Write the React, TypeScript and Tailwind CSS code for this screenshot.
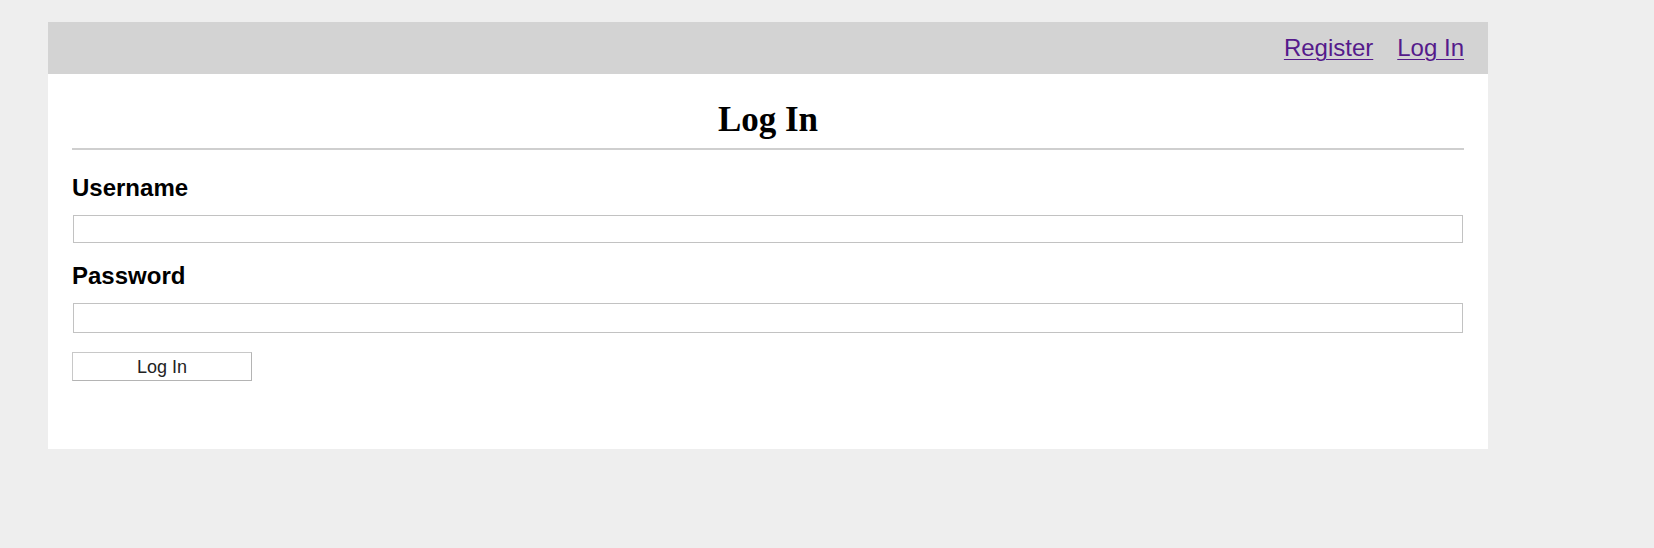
import React from "react";

export default function App() {
  return (
    <div className="min-h-[548px] w-full bg-[#eeeeee] pt-[22px] pl-[48px]">
      <div className="w-[1440px] bg-white">
        {/* top bar with auth links */}
        <nav className="flex h-[52px] items-center justify-end gap-[24px] bg-[#d3d3d3] px-[24px] font-['Liberation_Sans',Arial,sans-serif] text-[24px] leading-[52px]">
          <a href="#" className="text-[#551a8b] underline decoration-1 underline-offset-[3px]">
            Register
          </a>
          <a href="#" className="text-[#551a8b] underline decoration-1 underline-offset-[3px]">
            Log In
          </a>
        </nav>

        <main className="px-[24px] pt-[26px] pb-[68px]">
          <h1 className="text-center font-['Liberation_Serif','Times_New_Roman',serif] text-[35px] font-bold leading-[40px] text-black">
            Log In
          </h1>
          <hr className="mt-[8px] h-[2px] border-0 bg-[#cfcfcf]" />

          <form className="flex flex-col font-['Liberation_Sans',Arial,sans-serif]" onSubmit={(e) => e.preventDefault()}>
            <label htmlFor="username" className="mt-[24px] text-[24px] font-bold leading-[28px] text-black">
              Username
            </label>
            <input
              id="username"
              type="text"
              className="mx-px mt-[13px] h-[28px] border border-[#c2c2c2] bg-white px-1 text-[16px] outline-none"
            />

            <label htmlFor="password" className="mt-[19px] text-[24px] font-bold leading-[28px] text-black">
              Password
            </label>
            <input
              id="password"
              type="password"
              className="mx-px mt-[13px] h-[30px] border border-[#c2c2c2] bg-white px-1 text-[16px] outline-none"
            />

            <button
              type="submit"
              className="mt-[19px] h-[29px] w-[180px] border border-[#c8c8c8] border-r-[#b4b4b4] border-b-[#b4b4b4] bg-white text-[18px] leading-none text-[#222222]"
            >
              Log In
            </button>
          </form>
        </main>
      </div>
    </div>
  );
}
